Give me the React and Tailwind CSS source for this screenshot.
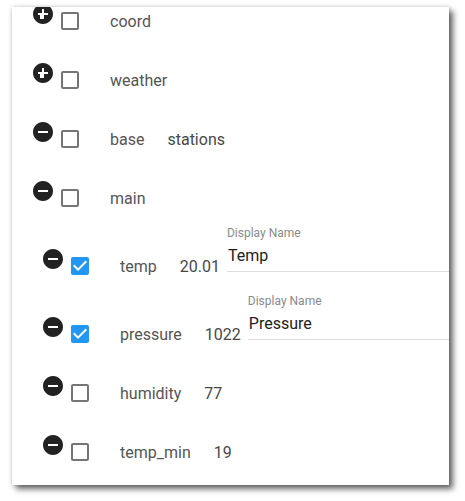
import React from "react";

const AddCircle = () => (
  <svg width="24" height="24" viewBox="0 0 24 24" className="shrink-0 mb-[14px]">
    <path fill="#222" d="M12 2C6.48 2 2 6.48 2 12s4.48 10 10 10 10-4.48 10-10S17.52 2 12 2zm5 11h-4v4h-4v-4H7v-2h4V7h2v4h4v2z" />
  </svg>
);
const RemoveCircle = () => (
  <svg width="24" height="24" viewBox="0 0 24 24" className="shrink-0 mb-[14px]">
    <path fill="#222" d="M12 2C6.48 2 2 6.48 2 12s4.48 10 10 10 10-4.48 10-10S17.52 2 12 2zm5 11H7v-2h10v2z" />
  </svg>
);
const Box = ({ checked }) =>
  checked ? (
    <svg width="24" height="24" viewBox="0 0 24 24" className="shrink-0 ml-[3px]">
      <path fill="#2196f3" d="M19 3H5c-1.11 0-2 .9-2 2v14c0 1.1.89 2 2 2h14c1.11 0 2-.9 2-2V5c0-1.1-.89-2-2-2zm-9 14l-5-5 1.41-1.41L10 14.17l7.59-7.59L19 8l-9 9z" />
    </svg>
  ) : (
    <svg width="24" height="24" viewBox="0 0 24 24" className="shrink-0 ml-[3px]">
      <path fill="#757575" d="M19 5v14H5V5h14m0-2H5c-1.1 0-2 .9-2 2v14c0 1.1.9 2 2 2h14c1.1 0 2-.9 2-2V5c0-1.1-.9-2-2-2z" />
    </svg>
  );

const Field = ({ value }) => (
  <div className="ml-[7px] mb-[34px] w-[260px] shrink-0">
    <div className="text-[12px] leading-[14px] text-[#8a8a8a]">Display Name</div>
    <div className="pt-[6px] pb-[6px] border-b border-[#dedede] text-[16px] leading-[19px] text-[#222] pl-[1px]">
      {value}
    </div>
  </div>
);

const Row = ({ plus, name, value, checked, field, nested }) => (
  <div
    className={
      "flex items-center whitespace-nowrap " +
      (nested ? "pl-[29px] " : "pl-[19px] ") +
      (field ? "h-[68px] pt-[9px]" : "h-[59px]")
    }
  >
    {plus ? <AddCircle /> : <RemoveCircle />}
    <Box checked={checked} />
    <span className="ml-[28px] text-[#555]">{name}</span>
    {value && <span className="ml-[23px] text-[#484848]">{value}</span>}
    {field && <Field value={field} />}
  </div>
);

export default function App() {
  return (
    <div className="w-[465px] h-[501px] bg-white pt-[7px] pl-[12px]" style={{ fontFamily: "Roboto, 'Liberation Sans', sans-serif" }}>
      <div className="w-[437px] h-[478px] bg-white overflow-hidden shadow-[4px_4px_6px_rgba(0,0,0,0.6),0_0_4px_rgba(0,0,0,0.2)] text-[16px] leading-[19px]">
        <div className="-mt-[15.5px]">
          <Row plus name="coord" />
          <Row plus name="weather" />
          <Row name="base" value="stations" />
          <Row name="main" />
          <Row nested name="temp" value="20.01" checked field="Temp" />
          <Row nested name="pressure" value="1022" checked field="Pressure" />
          <Row nested name="humidity" value="77" />
          <Row nested name="temp_min" value="19" />
        </div>
      </div>
    </div>
  );
}
